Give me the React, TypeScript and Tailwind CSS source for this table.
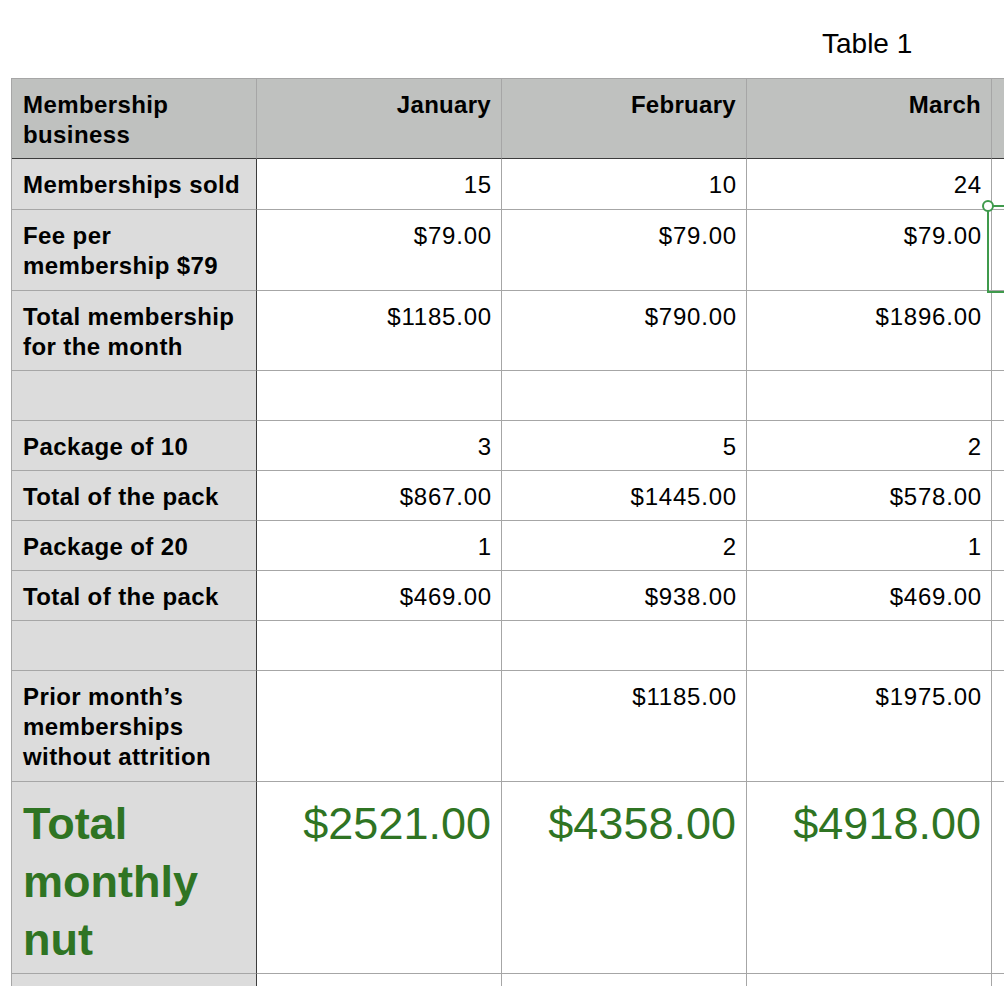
import * as React from 'react';

type Row = {
  label: string;
  values: string[];
  h: string;
  big?: boolean;
};

const ROWS: Row[] = [
  { label: 'Memberships sold', values: ['15', '10', '24'], h: 'h-[51px]' },
  { label: 'Fee per membership $79', values: ['$79.00', '$79.00', '$79.00'], h: 'h-[81px]' },
  { label: 'Total membership for the month', values: ['$1185.00', '$790.00', '$1896.00'], h: 'h-[80px]' },
  { label: '', values: ['', '', ''], h: 'h-[50px]' },
  { label: 'Package of 10', values: ['3', '5', '2'], h: 'h-[50px]' },
  { label: 'Total of the pack', values: ['$867.00', '$1445.00', '$578.00'], h: 'h-[50px]' },
  { label: 'Package of 20', values: ['1', '2', '1'], h: 'h-[50px]' },
  { label: 'Total of the pack', values: ['$469.00', '$938.00', '$469.00'], h: 'h-[50px]' },
  { label: '', values: ['', '', ''], h: 'h-[50px]' },
  { label: 'Prior month\u2019s memberships without attrition', values: ['', '$1185.00', '$1975.00'], h: 'h-[111px]' },
  { label: 'Total monthly nut', values: ['$2521.00', '$4358.00', '$4918.00'], h: 'h-[192px]', big: true },
  { label: '', values: ['', '', ''], h: 'h-[50px]' },
];

export default function App(): React.JSX.Element {
  return (
    <div className="relative h-[986px] w-[1004px] overflow-hidden bg-white text-black [font-family:'Liberation_Sans',Arial,sans-serif]">
      <div className="h-[78px] pl-[822px] pt-[27px] text-[28px] leading-[34px]">Table 1</div>
      <div className="ml-[11px] grid w-[1226px] grid-cols-[245px_245px_245px_245px_245px] border-l border-t border-[#a6a6a6]">
        <div className="h-[80px] border-b border-r border-b-[#3c3c3c] border-r-[#a6a6a6] bg-[#bfc1bf] pl-[11px] pr-[10px] pt-[11px] text-[24px] font-bold leading-[30px] tracking-[0.4px]">
          Membership business
        </div>
        {['January', 'February', 'March', ''].map((m, i) => (
          <div
            key={i}
            className="h-[80px] border-b border-r border-b-[#3c3c3c] border-r-[#a6a6a6] bg-[#bfc1bf] pr-[10px] pt-[11px] text-right text-[24px] font-bold leading-[30px] tracking-[0.3px]"
          >
            {m}
          </div>
        ))}
        {ROWS.map((r, ri) => (
          <React.Fragment key={ri}>
            <div
              className={`${r.h} border-b border-r border-b-[#a6a6a6] border-r-[#3c3c3c] bg-[#dcdcdc] pl-[11px] pr-[8px] ${
                r.big
                  ? 'pt-[13px] text-[45px] leading-[58px] text-[#2f7423]'
                  : 'pt-[11px] text-[24px] leading-[30px] tracking-[0.4px]'
              } font-bold`}
            >
              {r.label}
            </div>
            {[...r.values, ''].map((v, vi) => (
              <div
                key={vi}
                className={`${r.h} border-b border-r border-[#a6a6a6] text-right ${
                  r.big
                    ? 'pr-[10px] pt-[13px] text-[45px] leading-[58px] text-[#2f7423]'
                    : 'pr-[9px] pt-[11px] text-[24px] leading-[30px] tracking-[0.8px]'
                }`}
              >
                {v}
              </div>
            ))}
          </React.Fragment>
        ))}
      </div>
      {/* selection outline on the cut-off fifth column */}
      <div className="absolute left-[987px] top-[205px] h-[88px] w-[40px] border-2 border-[#3f9a4c]" />
      <div className="absolute left-[982px] top-[200px] h-[12px] w-[12px] rounded-full border-2 border-[#3f9a4c] bg-white" />
    </div>
  );
}
